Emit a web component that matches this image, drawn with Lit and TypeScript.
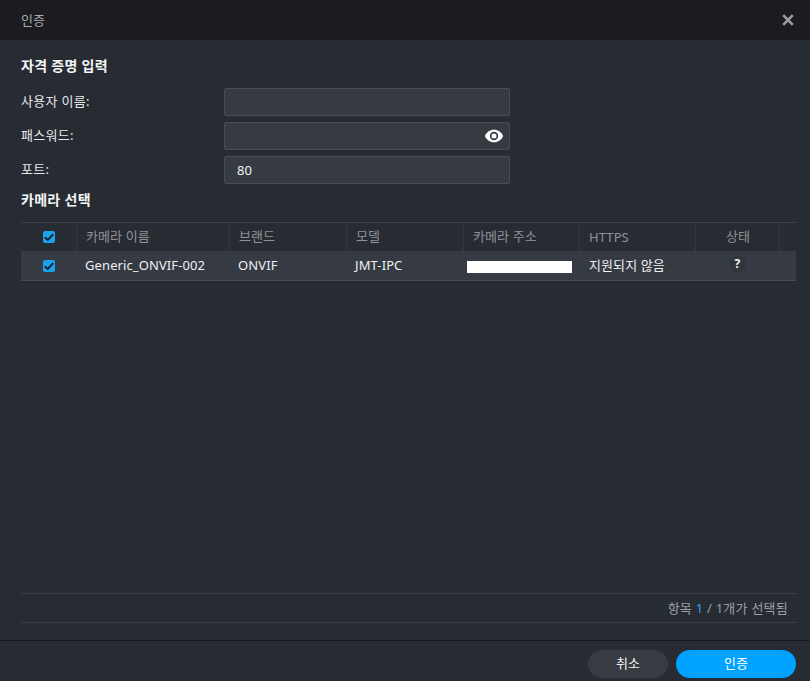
import { LitElement, html, css } from 'lit';
import { customElement } from 'lit/decorators.js';

const columns = ['카메라 이름', '브랜드', '모델', '카메라 주소', 'HTTPS', '상태', ''];

@customElement('app-root')
export class AppRoot extends LitElement {
  private _check() {
    return html`<span class="check">
      <svg viewBox="0 0 12 12" width="12" height="12" aria-hidden="true">
        <path d="M1.8 6.2 L4.8 9 L10.2 3.2" fill="none" stroke="#1b2027" stroke-width="1.9" />
      </svg>
    </span>`;
  }

  override render() {
    return html`
      <div class="dialog">
        <header class="title-bar">
          <span class="title">인증</span>
          <svg class="close" viewBox="0 0 12 12" width="12" height="12" aria-label="닫기">
            <path d="M1.2 1.2 L10.8 10.8 M10.8 1.2 L1.2 10.8" stroke="#9a9c9f" stroke-width="2.6" fill="none" />
          </svg>
        </header>

        <main class="body">
          <h2 class="section first">자격 증명 입력</h2>
          <div class="form">
            <label>사용자 이름:</label>
            <div class="input"></div>
            <label>패스워드:</label>
            <div class="input">
              <svg class="eye" viewBox="0 0 24 24" width="20" height="20" aria-hidden="true">
                <path
                  fill="#fff"
                  fill-rule="evenodd"
                  d="M12 4.5C7 4.5 2.7 7.6 1 12c1.7 4.4 6 7.5 11 7.5s9.3-3.100 11-7.500C21.300 7.600 17 4.500 12 4.500Zm0 12.500a5 5 0 1 1 0-10 5 5 0 0 1 0 10Zm0-8a3 3 0 1 0 0 6 3 3 0 0 0 0-6Z"
                />
              </svg>
            </div>
            <label>포트:</label>
            <div class="input">80</div>
          </div>

          <h2 class="section second">카메라 선택</h2>
          <div class="table">
            <div class="head">
              <div class="cell check-cell">${this._check()}</div>
              ${columns.map(
                (c) => html`<div class="cell ${c === '상태' ? 'center' : ''} ${c === 'HTTPS' ? 'latin' : ''}">${c}</div>`
              )}
            </div>
            <div class="row">
              <div class="cell check-cell">${this._check()}</div>
              <div class="cell text">Generic_ONVIF-002</div>
              <div class="cell text">ONVIF</div>
              <div class="cell text">JMT-IPC</div>
              <div class="cell"><span class="redacted"></span></div>
              <div class="cell text support">지원되지 않음</div>
              <div class="cell center"><span class="help">?</span></div>
              <div class="cell"></div>
            </div>
          </div>

          <div class="spacer"></div>
          <div class="status">항목 <span class="num">1</span> / 1개가 선택됨</div>
        </main>

        <footer class="actions">
          <button class="btn cancel">취소</button>
          <button class="btn ok">인증</button>
        </footer>
      </div>
    `;
  }

  static styles = css`
    :host {
      display: block;
      width: 810px;
      height: 681px;
      font-family: 'Noto Sans', 'Noto Sans CJK KR', sans-serif;
      font-size: 13px;
      letter-spacing: 0.1px;
      color: #f0f1f2;
    }

    .dialog {
      display: flex;
      flex-direction: column;
      height: 100%;
      background: #272b32;
      overflow: hidden;
    }

    .title-bar {
      display: flex;
      align-items: center;
      justify-content: space-between;
      height: 40px;
      flex: none;
      padding: 0 16px 0 21px;
      background: #1a1c20;
    }

    .title {
      color: #a9abae;
      font-size: 13px;
      margin-bottom: 2px;
    }

    .body {
      flex: 1;
      display: flex;
      flex-direction: column;
      min-height: 0;
      padding: 0 14px 0 21px;
      border-bottom: 1px solid #17191c;
    }

    .section {
      margin: 0;
      height: 20px;
      line-height: 20px;
      font-size: 14px;
      font-weight: 700;
      letter-spacing: 0.3px;
      color: #f4f5f6;
    }

    .section.first {
      margin-top: 16px;
    }

    .section.second {
      margin-top: 6px;
    }

    .form {
      display: grid;
      grid-template-columns: 203px 286px;
      grid-auto-rows: 28px;
      row-gap: 6px;
      margin-top: 12px;
      align-items: center;
    }

    label {
      color: #e6e7e9;
      font-size: 13px;
      letter-spacing: 0.3px;
      padding-bottom: 3px;
    }

    .input {
      display: flex;
      align-items: center;
      justify-content: flex-end;
      box-sizing: border-box;
      height: 28px;
      padding: 0 12px;
      background: #363b43;
      border: 1px solid #484d55;
      border-radius: 2px;
      color: #f0f1f2;
      font-size: 13px;
    }

    .input:last-child {
      justify-content: flex-start;
    }

    .eye {
      margin-right: -7px;
    }

    .table {
      margin-top: 12px;
      border-top: 1px solid #3e434a;
    }

    .head,
    .row {
      display: grid;
      grid-template-columns: 55px 153px 117px 117px 116px 116px 84px 17px;
      align-items: center;
    }

    .head {
      height: 28px;
      color: #8f9397;
    }

    .head .cell + .cell {
      border-left: 1px solid #33373e;
      padding-bottom: 3px;
    }

    .head .cell.latin {
      padding-bottom: 0;
    }

    .row {
      height: 29px;
      background: #363b43;
      border-bottom: 1px solid #474c53;
      color: #eef0f1;
    }

    .cell {
      box-sizing: border-box;
      display: flex;
      align-items: center;
      height: 100%;
      padding: 0 8px 0 9px;
      white-space: nowrap;
      min-width: 0;
    }

    .row .cell {
      padding-left: 9px;
    }

    .row .cell.text {
      padding-bottom: 2px;
    }

    .row .cell.support {
      padding-left: 10px;
    }

    .cell.center {
      justify-content: center;
    }

    .cell.check-cell {
      justify-content: center;
      padding: 0 0 0 1px;
    }

    .check {
      display: flex;
      align-items: center;
      justify-content: center;
      width: 12px;
      height: 12px;
      background: #19a3ee;
      border-radius: 2px;
    }

    .redacted {
      display: block;
      flex: none;
      width: 105px;
      height: 12px;
      margin: 3px 0 0 -5px;
      background: #fff;
    }

    .help {
      display: flex;
      align-items: center;
      justify-content: center;
      width: 16px;
      height: 16px;
      margin-bottom: 4px;
      border-radius: 50%;
      background: #30343b;
      color: #f2f3f4;
      font-size: 12px;
      font-weight: 700;
    }

    .spacer {
      flex: 1;
      border-bottom: 1px solid #3a3e45;
    }

    .status {
      box-sizing: border-box;
      height: 29px;
      line-height: 28px;
      padding-right: 8px;
      margin-bottom: 17px;
      text-align: right;
      color: #9b9ea2;
      border-bottom: 1px solid #3a3e45;
      font-size: 13px;
      letter-spacing: 0.24px;
    }

    .num {
      color: #2ea3ef;
    }

    .actions {
      display: flex;
      justify-content: flex-end;
      gap: 8px;
      flex: none;
      padding: 9px 14px 3px 0;
    }

    .btn {
      height: 28px;
      border: none;
      border-radius: 14px;
      padding: 0 0 3px;
      font-family: inherit;
      font-size: 13px;
      color: #fff;
    }

    .cancel {
      width: 80px;
      background: #383c42;
      color: #f0f1f2;
    }

    .ok {
      width: 120px;
      background: #00a2ff;
    }
  `;
}

declare global {
  interface HTMLElementTagNameMap {
    'app-root': AppRoot;
  }
}
